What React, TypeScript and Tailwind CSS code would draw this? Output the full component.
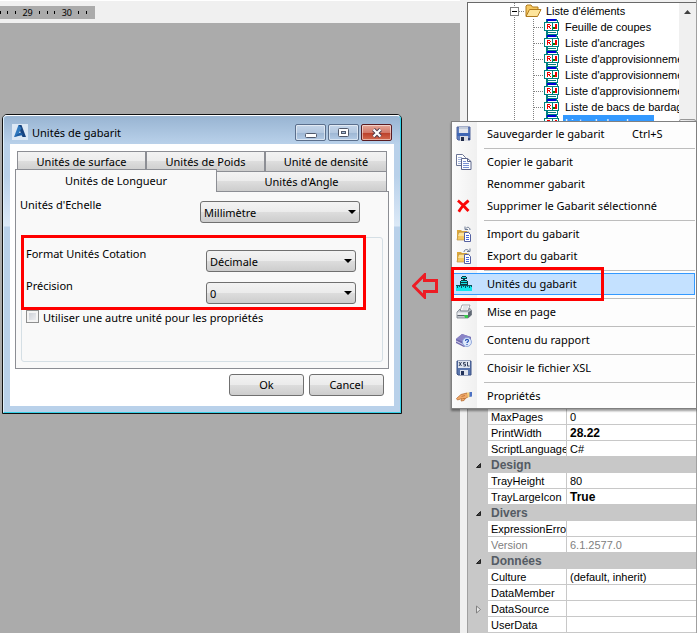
import { useState, type ReactNode } from 'react';
import clsx from 'clsx';

const uiFont = 'font-["Noto_Sans","Open_Sans",sans-serif]';
const classicFont = 'font-["Liberation_Sans",Arial,sans-serif]';

/* ---------- Icons ---------- */

const Icon = ({ children }: { children: ReactNode }) => (
  <svg width="16" height="16" viewBox="0 0 16 16" className="block" aria-hidden="true">
    {children}
  </svg>
);

const SaveIcon = () => (
  <Icon>
    <path d="M1 1h13v13H2l-1-1z" fill="#5f7fc0" stroke="#53659a" />
    <rect x="3" y="1" width="9" height="6" fill="#e3e6ec" />
    <rect x="3" y="1" width="9" height="2" fill="#c4ccda" />
    <rect x="1" y="7" width="13" height="3" fill="#3f66b4" />
    <rect x="4" y="10" width="8" height="5" fill="#d9dbe2" />
    <rect x="5" y="11" width="3" height="4" fill="#1f2a48" />
    <rect x="12" y="12" width="2" height="2" fill="#2e4276" />
  </Icon>
);

const CopyIcon = () => (
  <Icon>
    <path d="M.5.5h6l3 3v8h-9z" fill="#fff" stroke="#6b7494" />
    <path d="M2 3.500h4M2 5.500h5M2 7.500h4M2 9.500h4" stroke="#a3b4dc" />
    <path d="M5.500 4.500h6l3.500 3v8H5.500z" fill="#fff" stroke="#5d678c" />
    <path d="M11.500 4.500v3H15" stroke="#5d678c" fill="none" />
    <path d="M7 7.500h3M7 9.500h6M7 11.500h6M7 13.500h6" stroke="#7a93d4" fill="none" />
  </Icon>
);

const DeleteIcon = () => (
  <Icon>
    <path d="M3 3.500c3 2.500 5 5 8.500 8.500M11.500 3.500C8 6 5.500 9 3.500 12.500" stroke="#fa0505" strokeWidth="2.800" strokeLinecap="square" fill="none" />
  </Icon>
);

const FolderDocIcon = ({ out }: { out?: boolean }) => (
  <Icon>
    <path d="M1 4h4l1 1h5v9H1z" fill="#dca83b" />
    <path d="M1 14L3 6h10l-2 8z" fill="#f6c95f" stroke="#b9924a" strokeWidth=".7" />
    <path d="M3 7h8l-1 3H2z" fill="#fce39c" />
    <path d={out ? 'M8 4c0-3 4-3 5-1M14 .5v3h-3' : 'M14 4c0-3-3-3.500-4-1.500M9 .5v3h3'} stroke="#6c7a94" fill="none" />
    <path d="M8.500 6.500h4l2 2v7h-6z" fill="#fff" stroke="#5560a0" />
    <path d="M10 9.500h3M10 11.500h3M10 13.500h3" stroke="#4a68d8" />
  </Icon>
);

const UnitsIcon = () => (
  <svg width="16" height="16" viewBox="0 0 16 16" className="block" shapeRendering="crispEdges" aria-hidden="true">
    <path d="M6 0h4v1h1v2H9v1h2v1h1v4H4V5h1V4h2V3H5V1h1z" fill="#0b3a40" />
    <path d="M6 1h4v1H6zM5 5h6v1H5zM5 7h6v1H5z" fill="#14dfe4" />
    <path d="M0 10h16v5H0z" fill="#12e6ec" />
    <path d="M0 9.500h16" stroke="#0c5360" />
    <path d="M1.500 10v2M3.500 10v1M5.500 10v2M7.500 10v1M9.500 10v2M11.500 10v1M13.500 10v2M15.500 10v1" stroke="#0c5360" />
  </svg>
);

const PrinterIcon = () => (
  <Icon>
    <path d="M6 1h8l-2 6H4z" fill="#fff" stroke="#8a9099" strokeWidth=".8" />
    <path d="M7 3h5M6.500 5h5" stroke="#b4bac4" strokeWidth=".8" />
    <path d="M1 8l3-3 .500 2h8L13.500 4l2 2.500V11L12 14H1z" fill="#c3c8cf" stroke="#7a818c" strokeWidth=".8" />
    <path d="M1.500 8.500H12V11H1.500z" fill="#eceef1" />
    <path d="M1.500 11.500H12" stroke="#59606b" />
    <path d="M12 8.500L15.500 6v5L12 14z" fill="#606873" />
    <path d="M8 11h4v3H9z" fill="#35c94a" />
  </Icon>
);

const HelpBookIcon = () => (
  <Icon>
    <path d="M0 7l6-5 9 3v5l-7 5-8-4z" fill="#6f69ae" />
    <path d="M0 7l6-5 9 3-7 5z" fill="#8b84c6" />
    <path d="M0 9l8 4 4-3" stroke="#d9d7ee" fill="none" />
    <circle cx="11" cy="10" r="4.500" fill="#dfe9fb" stroke="#7f9bd6" strokeWidth=".8" />
    <path d="M9.500 9c0-2.200 3-2 3-.2 0 1-1.500 1-1.500 2.200M11 12v1" stroke="#2b58b8" strokeWidth="1.200" fill="none" />
  </Icon>
);

const XslIcon = () => (
  <Icon>
    <path d="M1 1h14v14H2l-1-1z" fill="#5a76ae" stroke="#3a5084" />
    <rect x="2" y="1" width="12" height="7" fill="#dfe5f0" />
    <path d="M3 2l2.500 4M5.500 2L3 6M9.500 2.500H7.500v1.700h2V6h-2M11.500 2v4h2" stroke="#26334f" strokeWidth=".9" fill="none" />
    <rect x="4" y="10" width="8" height="5" fill="#dfe3ec" />
    <rect x="5" y="11" width="3" height="4" fill="#22325a" />
  </Icon>
);

const HandIcon = () => (
  <Icon>
    <path d="M.5 10.500L5 6.500l6-1.500 1 4-2 1-1 1-1 1.500-3 .5 1-2.500-4.500 1.500z" fill="#f0a868" stroke="#b86e33" strokeWidth=".8" />
    <path d="M5.500 8.500l3.500-1M6.500 10.500h2.500" stroke="#b86e33" strokeWidth=".8" />
    <path d="M11 4.500h3v4.500l-2.500.5z" fill="#f7cf7a" />
    <path d="M13.500 4H16v4.500l-2.500.5z" fill="#4d72c4" />
  </Icon>
);

const ReportIcon = () => (
  <svg width="15" height="16" viewBox="0 0 15 16" className="block" shapeRendering="crispEdges" aria-hidden="true">
    <path d="M2 0h11l1 2v14H2z" fill="#008080" />
    <path d="M4 2h9v13H4z" fill="#fff" />
    <path d="M3 0h9v2H3z" fill="#0000d8" />
    <path d="M4 13.500h8" stroke="#008080" />
    <path d="M0 3h15v9H0z" fill="#008080" />
    <path d="M1 4h7v7H1zM9 4h5v7H9z" fill="#fff" />
    <path d="M3 5h3v1H4v1h2v1H4v2H3zM6 6h1v1H6zM5 8h1v1H5zM6 9h1v1H6z" fill="#f00000" />
    <path d="M9 8h2v2H9z" fill="#008000" />
    <path d="M11 5h2v5h-2z" fill="#f00000" />
  </svg>
);

const FolderIcon = () => (
  <svg width="17" height="16" viewBox="0 0 17 16" className="block" aria-hidden="true">
    <path d="M1 13V3l1-1h4l1.500 2H13v3" fill="#f5c75f" stroke="#b07a1c" />
    <path d="M1 13.500L4.500 6.500H16L12.500 13.500z" fill="#fde49a" stroke="#b07a1c" />
  </svg>
);

const LogoIcon = () => (
  <Icon>
    <rect width="16" height="16" fill="#dce8f5" />
    <path d="M6.500 1h3L14 13h-3.500l-2-4.500z" fill="#17437f" />
    <path d="M6.500 1L2 13l3.500-1L9.500 4z" fill="#2e78be" />
    <path d="M2 13l5-4h3l1 2z" fill="#1d5da3" />
  </Icon>
);

/* ---------- Ruler and canvas ---------- */

const Tick = () => <span className="h-[3px] w-px bg-black" />;

const Ruler = () => (
  <div className="h-[23px] border-t border-white bg-[#f0f0f0] pt-[5px]">
    <div className={clsx('flex h-[13px] w-[95px] items-center justify-between bg-[#ababab] pr-2 text-[9px]', uiFont)}>
      <Tick />
      <Tick />
      <Tick />
      <span>29</span>
      <Tick />
      <Tick />
      <Tick />
      <span>30</span>
      <Tick />
      <Tick />
    </div>
  </div>
);

/* ---------- Dialog ---------- */

const glossy = 'rounded-[3px] border border-[#707070] bg-[linear-gradient(#f3f3f3,#ebebeb_50%,#dddddd_50%,#cdcdcd)]';

const Combo = ({ id, value, options, width }: { id: string; value: string; options: string[]; width: string }) => (
  <span className={clsx('relative mt-1 block h-[22px]', width)}>
    <select id={id} defaultValue={value} className={clsx('block h-full w-full appearance-none pt-px pl-[3px] leading-5', glossy)}>
      {options.map((o) => (
        <option key={o}>{o}</option>
      ))}
    </select>
    <svg width="8" height="4" viewBox="0 0 8 4" className="pointer-events-none absolute top-[9px] right-1" aria-hidden="true">
      <path d="M0 0h8L4 4z" fill="#000" />
    </svg>
  </span>
);

const tabBase = 'border-[#8c8e94] text-center';
const tabIdle = 'h-5 border-t bg-[linear-gradient(#f3f3f3,#ebebeb_50%,#dddddd_50%,#cdcdcd)] leading-5';

const captionButton =
  'flex h-[17px] w-[31px] items-center justify-center rounded-[2px] border inset-ring inset-ring-white/50';
const captionBlue = 'border-[#5b6f8c] bg-[linear-gradient(#c5d6ea,#b4c8e0_50%,#9cb5d2_50%,#b3cbe6)]';
const captionRed = 'border-[#5a1c22] bg-[linear-gradient(#e5a898,#d2796a_50%,#b93c27_50%,#d3694f)]';

const UnitsDialog = () => {
  const [other, setOther] = useState(false);

  return (
    <section
      role="dialog"
      aria-labelledby="dlg-title"
      className={clsx(
        'absolute top-[114px] left-[2px] w-[400px] rounded-t-[5px] border border-[#111] bg-[#b9d1ea] text-[11px] text-black',
        uiFont,
      )}
    >
      <div className="rounded-t-[4px] border border-t-white border-r-[#35d1e8] border-b-[#35d1e8] border-l-[#dff0fa] bg-[linear-gradient(#98b4d2,#b9d1ea_28px,#b9d1ea_60px,#dce9f7_110px,#b9d1ea_111px)] px-[6px] pb-[6px]">
        <header className="flex h-7 items-start gap-1 pt-2 pr-[2px] pl-[2px]">
          <LogoIcon />
          <h2 id="dlg-title" className="flex-1 leading-[18px]">
            Unités de gabarit
          </h2>
          <div className="flex gap-[2px]">
            <button aria-label="Réduire" className={clsx(captionButton, captionBlue)}>
              <svg width="12" height="10" viewBox="0 0 12 10">
                <rect x=".5" y="5.500" width="11" height="4" rx="1" fill="#fff" stroke="#50596b" />
              </svg>
            </button>
            <button aria-label="Agrandir" className={clsx(captionButton, captionBlue)}>
              <svg width="11" height="9" viewBox="0 0 11 9">
                <rect x=".5" y=".5" width="10" height="8" rx="1" fill="#fff" stroke="#50596b" />
                <rect x="3.500" y="3.500" width="4" height="2" fill="#a9c0dc" stroke="#50596b" />
              </svg>
            </button>
            <button aria-label="Fermer" className={clsx(captionButton, captionRed)}>
              <svg width="12" height="10" viewBox="0 0 12 10">
                <path d="M2.500 1.500l7 7M9.500 1.500l-7 7" stroke="#4d3d4f" strokeWidth="4" />
                <path d="M2.500 1.500l7 7M9.500 1.500l-7 7" stroke="#fff" strokeWidth="2.200" />
              </svg>
            </button>
          </div>
        </header>

        <div className="bg-white px-[5px] pt-[7px] pb-[10px]">
          {/* Onglets */}
          <div role="tablist">
            <div className="flex px-[2px]">
              <button role="tab" className={clsx(tabBase, tabIdle, 'w-[129px] border-x')}>
                Unités de surface
              </button>
              <button role="tab" className={clsx(tabBase, tabIdle, 'w-[119px] border-x')}>
                Unités de Poids
              </button>
              <button role="tab" className={clsx(tabBase, tabIdle, 'flex-1 border-x')}>
                Unité de densité
              </button>
            </div>
            <div className="flex pr-[2px]">
              <button
                role="tab"
                aria-selected="true"
                className={clsx(tabBase, 'z-10 -mt-[2px] -mb-px h-[23px] w-[202px] border-x border-t bg-[#f9f9f9]')}
              >
                Unités de Longueur
              </button>
              <button role="tab" className={clsx(tabBase, tabIdle, 'flex-1 border-r')}>
                Unités d'Angle
              </button>
            </div>
          </div>

          <div role="tabpanel" className="border border-[#8c8e94] bg-[#f9f9f9] px-[5px] pt-[5px] pb-[6px] leading-4">
            <div className="-ml-px flex items-start">
              <label htmlFor="echelle" className="w-[180px]">
                Unités d'Echelle
              </label>
              <Combo id="echelle" value="Millimètre" options={['Millimètre', 'Centimètre', 'Mètre']} width="w-[160px]" />
            </div>

            <div className="relative mt-[14px] flex flex-col gap-[6px] rounded-[3px] border border-[#d5dfe5] pt-2 pb-[35px] pl-1">
              <div className="flex items-start">
                <label htmlFor="format" className="w-[180px]">
                  Format Unités Cotation
                </label>
                <Combo id="format" value="Décimale" options={['Décimale', 'Fractionnaire']} width="w-[150px]" />
              </div>
              <div className="flex items-start">
                <label htmlFor="precision" className="w-[180px]">
                  Précision
                </label>
                <Combo id="precision" value="0" options={['0', '1', '2', '3']} width="w-[150px]" />
              </div>
              <label className="flex items-start gap-1">
                <input
                  type="checkbox"
                  checked={other}
                  onChange={(e) => setOther(e.target.checked)}
                  className="size-[13px] appearance-none border border-[#8e8f8f] bg-[linear-gradient(135deg,#c5cad2,#f4f4f6)] inset-ring-2 inset-ring-[#f4f4f4] checked:bg-[#4a6fa5]"
                />
                Utiliser une autre unité pour les propriétés
              </label>
              <div className="pointer-events-none absolute -top-[3px] -left-px h-[75px] w-[345px] border-3 border-[#ff0000]" />
            </div>
          </div>

          <div className="mt-[5px] flex justify-end gap-[5px] pr-[5px]">
            <button className={clsx(glossy, 'h-[22px] w-[75px]')}>Ok</button>
            <button className={clsx(glossy, 'h-[22px] w-[75px]')}>Cancel</button>
          </div>
        </div>
      </div>
    </section>
  );
};

/* ---------- Tree ---------- */

const reports = [
  'Feuille de coupes',
  "Liste d'ancrages",
  "Liste d'approvisionnement",
  "Liste d'approvisionnement",
  "Liste d'approvisionnement",
  'Liste de bacs de bardage',
  'Liste de bardages',
];

const Tree = () => (
  <div className="flex min-h-0 flex-1 border-t border-l border-[#696969] bg-white">
    <ul className="min-w-0 flex-1 overflow-hidden text-[11px] leading-4 whitespace-nowrap">
      <li className="flex">
        <svg width="57" height="16" viewBox="0 0 57 16" shapeRendering="crispEdges" aria-hidden="true">
          <path d="M46.500 0v16M51 8.500h6" stroke="#808080" strokeDasharray="1 1" />
          <rect x="42.500" y="4.500" width="8" height="8" fill="#fff" stroke="#808080" />
          <path d="M44 8.500h5" stroke="#000" />
        </svg>
        <FolderIcon />
        <span className="pl-1">Liste d'éléments</span>
      </li>
      {reports.map((name, i) => (
        <li key={i} className="flex">
          <svg width="76" height="16" viewBox="0 0 76 16" className="shrink-0" shapeRendering="crispEdges" aria-hidden="true">
            <path d="M46.500 0v16M65.500 0v16M66 8.500h10" stroke="#808080" strokeDasharray="1 1" />
          </svg>
          <span className="shrink-0">
            <ReportIcon />
          </span>
          <span className={clsx('ml-1 px-[2px]', i === 6 && 'bg-[#3399ff] text-white')}>{name}</span>
        </li>
      ))}
    </ul>
    <div className="w-[17px] bg-[#f0f0f0]">
      <svg width="17" height="17" viewBox="0 0 17 17" aria-hidden="true">
        <path d="M5 11l3.500-4 3.500 4z" fill="#404040" />
      </svg>
      <div className="mt-[99px] h-10 rounded-[2px] border border-[#979797] bg-[linear-gradient(90deg,#f4f4f4,#d6d6d8)]" />
    </div>
  </div>
);

/* ---------- Property grid ---------- */

type Prop = { name: string; value?: string; bold?: boolean; muted?: boolean; expandable?: boolean };

const groups: { title?: string; props: Prop[] }[] = [
  {
    props: [
      { name: 'MaxPages', value: '0' },
      { name: 'PrintWidth', value: '28.22', bold: true },
      { name: 'ScriptLanguage', value: 'C#' },
    ],
  },
  {
    title: 'Design',
    props: [
      { name: 'TrayHeight', value: '80' },
      { name: 'TrayLargeIcon', value: 'True', bold: true },
    ],
  },
  {
    title: 'Divers',
    props: [{ name: 'ExpressionError' }, { name: 'Version', value: '6.1.2577.0', muted: true }],
  },
  {
    title: 'Données',
    props: [
      { name: 'Culture', value: '(default, inherit)' },
      { name: 'DataMember' },
      { name: 'DataSource', expandable: true },
      { name: 'UserData' },
    ],
  },
];

const cell = 'border-b border-[#c8c8c8] p-0 pt-px pl-[3px] leading-[14px] whitespace-nowrap';

const PropertyGrid = () => (
  <table className="w-full table-fixed border-separate border-spacing-0 border-l border-[#a0a0a0] bg-white text-[11px]">
    <colgroup>
      <col className="w-5" />
      <col className="w-[79px]" />
      <col />
    </colgroup>
    {groups.map((g, i) => (
      <tbody key={i}>
        {g.title && (
          <tr className="h-4 bg-[#c8c8c8]">
            <td className="p-0">
              <svg width="20" height="15" viewBox="0 0 20 15" className="block" aria-hidden="true">
                <path d="M8.500 9.500h4v-4z" fill="#404040" stroke="#222" />
              </svg>
            </td>
            <th colSpan={2} className="p-0 pl-[3px] text-left text-xs leading-4 font-bold text-[#545b64]">
              {g.title}
            </th>
          </tr>
        )}
        {g.props.map((p) => (
          <tr key={p.name} className={clsx('h-4', p.muted && 'text-[#808080]')}>
            <td className="bg-[#c8c8c8] p-0">
              {p.expandable && (
                <svg width="20" height="15" viewBox="0 0 20 15" className="block" aria-hidden="true">
                  <path d="M8.500 4v7l4-3.500z" fill="#e8e8e8" stroke="#808080" />
                </svg>
              )}
            </td>
            <td className={clsx(cell, 'overflow-hidden border-r')}>{p.name}</td>
            <td className={clsx(cell, p.bold && 'text-[12px] font-bold')}>{p.value}</td>
          </tr>
        ))}
      </tbody>
    ))}
  </table>
);

/* ---------- Context menu ---------- */

type Item = { label: string; icon?: ReactNode; shortcut?: string; active?: boolean };

const menu: Item[][] = [
  [{ label: 'Sauvegarder le gabarit', icon: <SaveIcon />, shortcut: 'Ctrl+S' }],
  [
    { label: 'Copier le gabarit', icon: <CopyIcon /> },
    { label: 'Renommer gabarit' },
    { label: 'Supprimer le Gabarit sélectionné', icon: <DeleteIcon /> },
  ],
  [
    { label: 'Import du gabarit', icon: <FolderDocIcon /> },
    { label: 'Export du gabarit', icon: <FolderDocIcon out /> },
  ],
  [{ label: 'Unités du gabarit', icon: <UnitsIcon />, active: true }],
  [{ label: 'Mise en page', icon: <PrinterIcon /> }],
  [{ label: 'Contenu du rapport', icon: <HelpBookIcon /> }],
  [{ label: 'Choisir le fichier XSL', icon: <XslIcon /> }],
  [{ label: 'Propriétés', icon: <HandIcon /> }],
];

const ContextMenu = () => (
  <div
    role="menu"
    className={clsx(
      'absolute top-[121px] right-0 w-[246px] border border-[#808080] bg-[linear-gradient(90deg,#fcfcfc,#f0f0f0_25px,#fdfdfd_25px)] p-px text-[11px] shadow-[0_2px_2px_rgba(0,0,0,0.4)]',
      uiFont,
    )}
  >
    {menu.map((section, i) => (
      <div key={i} role="group">
        {i > 0 && (
          <div className="flex h-[6px] items-center pl-[31px]">
            <hr className="w-full border-[#bdbdbd]" />
          </div>
        )}
        {section.map((item) => (
          <div key={item.label} className="relative">
            <button
              role="menuitem"
              className={clsx(
                'flex h-[22px] w-full items-center border pl-[2px] text-left',
                item.active ? 'border-[#3399ff] bg-[#c4e1ff]' : 'border-transparent',
              )}
            >
              <span className="w-[31px]">{item.icon}</span>
              <span className={clsx(item.shortcut && 'w-[145px]')}>{item.label}</span>
              {item.shortcut && <span>{item.shortcut}</span>}
            </button>
            {item.active && (
              <div className="pointer-events-none absolute -top-[6px] -left-[2px] h-[34px] w-[153px] border-3 border-[#ff0000]" />
            )}
          </div>
        ))}
      </div>
    ))}
  </div>
);

export default function App() {
  return (
    <main className="relative flex h-screen overflow-hidden bg-[#f0f0f0] text-black">
      <div className="flex min-w-0 flex-1 flex-col">
        <Ruler />
        <div className="flex-1 bg-[#ababab]" />
      </div>

      <aside className={clsx('flex w-[237px] flex-col border-r border-[#a0a0a0] pt-[2px] pl-[7px]', classicFont)}>
        <Tree />
        <PropertyGrid />
      </aside>

      <UnitsDialog />

      <svg width="26" height="26" viewBox="0 0 26 26" className="absolute top-[273px] right-[259px]" aria-hidden="true">
        <path d="M1.500 13L12.500 2v5.500h12v11h-12V24z" fill="none" stroke="#ed1c24" strokeWidth="3" />
      </svg>

      <ContextMenu />
    </main>
  );
}
